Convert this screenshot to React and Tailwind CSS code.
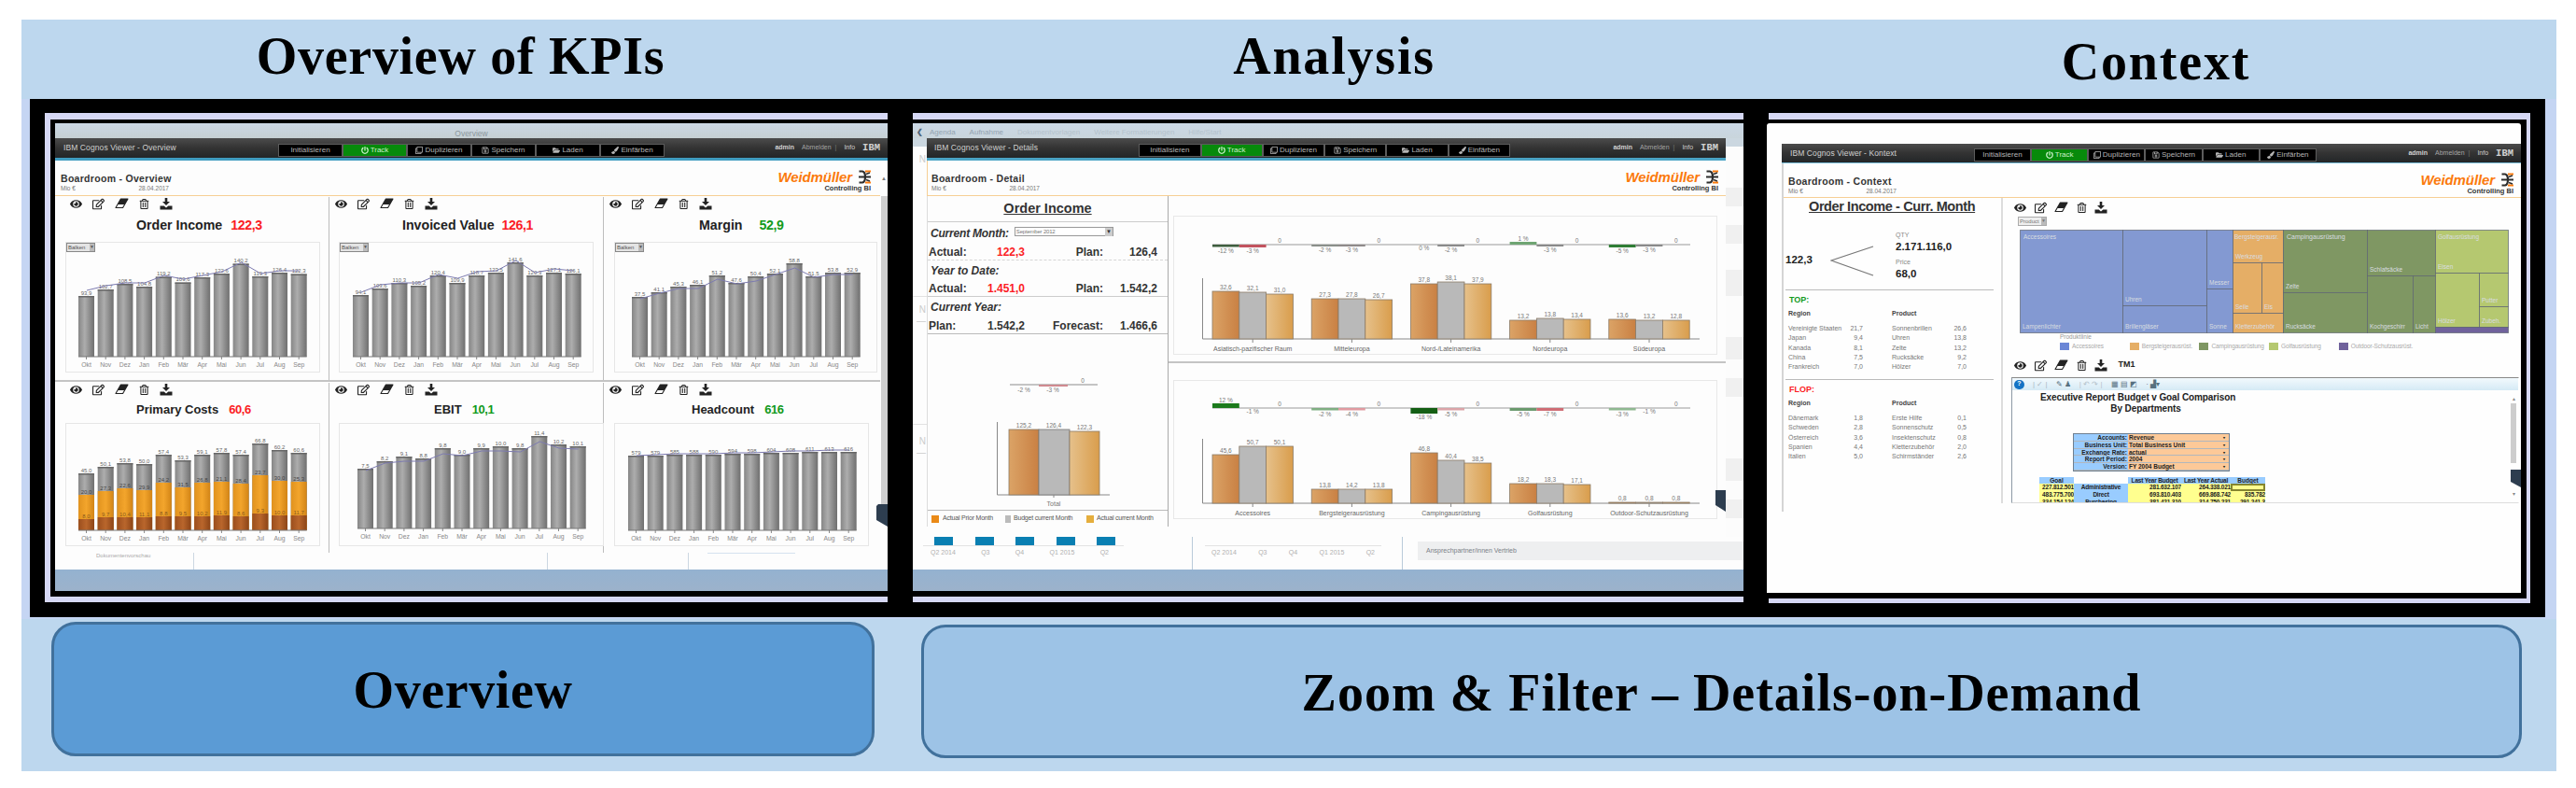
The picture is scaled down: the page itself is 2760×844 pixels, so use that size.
import clsx from "clsx";
import { FaEye, FaRegEdit, FaRegTrashAlt, FaPowerOff, FaRegClone, FaRegSave, FaFolderOpen, FaPaintBrush } from "react-icons/fa";

const MONTHS = ["Okt", "Nov", "Dez", "Jan", "Feb", "Mär", "Apr", "Mai", "Jun", "Jul", "Aug", "Sep"];

// tops and line points are y coordinates inside the chart box
const KPIS = [
    {
        title: "Order Income", value: "122,3", tone: "text-[#fb1d25]", head: "pl-[87px] gap-[9px]", icons: "pl-4", box: "ml-[11px] w-[273px]",
        width: 273, x0: 13, base: 122, select: true,
        tops: [57, 50, 44, 47, 36.5, 42.5, 37, 33, 22.5, 36, 32, 33.5],
        line: [51, 46, 43, 43, 35, 39, 35, 31, 21, 33, 30, 30],
        labels: ["93,9", "102,7", "108,5", "104,8", "119,2", "109,6", "117,3", "122,6", "140,2", "119,3", "126,4", "122,3"],
    },
    {
        title: "Invoiced Value", value: "126,1", tone: "text-[#fb1d25]", head: "pl-[78px] gap-[8px]", icons: "pl-[6px]", box: "ml-[10px] w-[273px]",
        width: 273, x0: 14, base: 122, select: true,
        tops: [56, 49, 43, 46, 35, 43, 35, 32, 21, 35, 32, 33],
        line: [53, 45, 43, 43, 34, 38, 31, 30, 19, 32, 28, 30],
        labels: ["94,1", "103,6", "110,3", "105,2", "120,4", "109,9", "118,7", "123,5", "141,6", "120,3", "127,1", "126,1"],
    },
    {
        title: "Margin", value: "52,9", tone: "text-[#129a1c]", head: "pl-[102px] gap-[18px]", icons: "pl-[6px]", box: "ml-[11px] w-[282px]",
        width: 282, x0: 18, base: 122, select: true,
        tops: [58, 53, 47, 45, 35, 43, 36, 33, 22, 36, 32, 32],
        line: [60, 54, 49, 49, 39, 44, 41, 34, 27, 37, 34, 34],
        labels: ["37,5", "41,1", "45,3", "46,1", "51,2", "47,6", "50,4", "52,1", "58,8", "51,5", "53,8", "52,9"],
    },
    {
        title: "Primary Costs", value: "60,6", tone: "text-[#fb1d25]", head: "pl-[87px] gap-[11px]", icons: "pl-4", box: "ml-[11px] w-[273px]",
        width: 273, x0: 13, base: 114, stacked: true,
        tops: [53, 46, 42, 43, 33, 39, 33, 31, 33, 21, 28, 31],
        mid: [76, 72, 69, 71, 63, 68, 63, 62, 64, 55, 61, 62],
        low: [102, 100, 100, 100, 99, 99, 99, 98, 99, 96, 98, 98],
        labels: ["45,0", "50,1", "53,8", "50,0", "57,4", "53,3", "59,1", "57,8", "57,4", "66,8", "60,2", "60,6"],
    },
    {
        title: "EBIT", value: "10,1", tone: "text-[#129a1c]", head: "pl-[112px] gap-[11px]", icons: "pl-[6px]", box: "ml-[10px] w-[284px]",
        width: 284, x0: 19, base: 112,
        tops: [48, 40, 35, 37, 26, 33, 26, 24, 26, 13, 22, 24],
        line: [50, 42, 40, 40, 32, 34, 29, 29, 30, 19, 26, 27],
        labels: ["7,5", "8,2", "9,1", "8,8", "9,8", "9,0", "9,9", "10,0", "9,8", "11,4", "10,2", "10,1"],
    },
    {
        title: "Headcount", value: "616", tone: "text-[#129a1c]", head: "pl-[94px] gap-[11px]", icons: "pl-[6px]", box: "ml-[11px] w-[273px]",
        width: 273, x0: 14, base: 114,
        tops: [34, 34, 33, 33, 33, 32, 32, 31, 31, 30, 30, 30],
        line: [34, 33, 32, 32, 32, 31, 31, 30, 29, 29, 28, 28],
        labels: ["579", "579", "585", "588", "590", "594", "598", "604", "608", "611", "613", "616"],
    },
];

const REGION_GROUPS = [
    { name: "Asiatisch-pazifischer Raum", tops: [80, 81, 83], labels: ["32,6", "32,1", "31,0"], deltas: [[-2.5, "-12 %", "#3f5e3f"], [-3, "-3 %", "#c2535f"]] },
    { name: "Mitteleuropa", tops: [88, 88, 89], labels: ["27,3", "27,8", "26,7"], deltas: [[-2, "-2 %", "#8a8f8a"], [-2, "-3 %", "#8f8a8a"]] },
    { name: "Nord-/Lateinamerika", tops: [72, 70, 72], labels: ["37,8", "38,1", "37,9"], deltas: [[0, "0 %", "#999"], [-2, "-2 %", "#8a8a8a"]] },
    { name: "Nordeuropa", tops: [111, 109, 110], labels: ["13,2", "13,8", "13,4"], deltas: [[3, "1 %", "#6fa573"], [-2, "-3 %", "#8a8a8a"]] },
    { name: "Südeuropa", tops: [110, 111, 111], labels: ["13,6", "13,2", "12,8"], deltas: [[-3, "-5 %", "#2f7d35"], [-2, "-3 %", "#8a8a8a"]] },
];

const PRODUCT_GROUPS = [
    { name: "Accessoires", tops: [79, 70, 70], labels: ["45,6", "50,7", "50,1"], deltas: [[5, "12 %", "#1c7a1c"], [0, "-1 %", "#999"]] },
    { name: "Bergsteigerausrüstung", tops: [116, 116, 116], labels: ["13,8", "14,2", "13,8"], deltas: [[-2.5, "-2 %", "#7fae82"], [-2.5, "-4 %", "#e09aa0"]] },
    { name: "Campingausrüstung", tops: [77, 85, 88], labels: ["46,8", "40,4", "38,5"], deltas: [[-6, "-18 %", "#145f14"], [-2.5, "-5 %", "#dba4a8"]] },
    { name: "Golfausrüstung", tops: [110, 110, 111], labels: ["18,2", "18,3", "17,1"], deltas: [[-3, "-5 %", "#6b9a6e"], [-3, "-7 %", "#cf6d75"]] },
    { name: "Outdoor-Schutzausrüstung", tops: [130, 130, 130], labels: ["0,8", "0,8", "0,8"], deltas: [[-2.5, "-3 %", "#8fb891"], [0, "-1 %", "#999"]] },
];

const TREEMAP = [
    { x: 0, y: 0, w: 110, h: 110, c: "#8399d2", t: "Lampenlichter" },
    { x: 110, y: 0, w: 90, h: 81, c: "#8399d2", t: "Uhren" },
    { x: 110, y: 81, w: 90, h: 29, c: "#8399d2", t: "Brillengläser" },
    { x: 200, y: 0, w: 28, h: 63, c: "#8399d2", t: "Messer" },
    { x: 200, y: 63, w: 28, h: 47, c: "#8399d2", t: "Sonne" },
    { x: 228, y: 0, w: 54, h: 35, c: "#e5ae66", t: "Werkzeug" },
    { x: 228, y: 35, w: 31, h: 54, c: "#e5ae66", t: "Seile" },
    { x: 259, y: 35, w: 23, h: 54, c: "#e5ae66", t: "Eis" },
    { x: 228, y: 89, w: 54, h: 21, c: "#e5ae66", t: "Kletterzubehör" },
    { x: 282, y: 0, w: 90, h: 67, c: "#7f9763", t: "Zelte" },
    { x: 282, y: 67, w: 90, h: 43, c: "#7f9763", t: "Rucksäcke" },
    { x: 372, y: 0, w: 73, h: 49, c: "#7f9763", t: "Schlafsäcke" },
    { x: 372, y: 49, w: 49, h: 61, c: "#7f9763", t: "Kochgeschirr" },
    { x: 421, y: 49, w: 24, h: 61, c: "#7f9763", t: "Licht" },
    { x: 445, y: 0, w: 78, h: 46, c: "#b5c870", t: "Eisen" },
    { x: 445, y: 46, w: 47, h: 58, c: "#b5c870", t: "Hölzer" },
    { x: 492, y: 46, w: 31, h: 36, c: "#b5c870", t: "Putter" },
    { x: 492, y: 82, w: 31, h: 22, c: "#b5c870", t: "Zubeh." },
    { x: 445, y: 104, w: 78, h: 6, c: "#70629c", t: "" },
];

const TOP_ROWS = [
    ["Vereinigte Staaten", "21,7", "Sonnenbrillen", "26,6"],
    ["Japan", "9,4", "Uhren", "13,8"],
    ["Kanada", "8,1", "Zelte", "13,2"],
    ["China", "7,5", "Rucksäcke", "9,2"],
    ["Frankreich", "7,0", "Hölzer", "7,0"],
];

const FLOP_ROWS = [
    ["Dänemark", "1,8", "Erste Hilfe", "0,1"],
    ["Schweden", "2,8", "Sonnenschutz", "0,5"],
    ["Österreich", "3,6", "Insektenschutz", "0,8"],
    ["Spanien", "4,4", "Kletterzubehör", "2,0"],
    ["Italien", "5,0", "Schirmständer", "2,6"],
];

const TABS = [
    { label: "Initialisieren" },
    { label: "Track", icon: FaPowerOff, active: true },
    { label: "Duplizieren", icon: FaRegClone },
    { label: "Speichern", icon: FaRegSave },
    { label: "Laden", icon: FaFolderOpen },
    { label: "Einfärben", icon: FaPaintBrush },
];

function Toolbar({ title, className, tabsClass, tabClass, rightClass }) {
    return (
        <div className={clsx("flex shrink-0 items-center bg-gradient-to-b from-[#4c4c4c] via-[#333333] to-[#232628] text-[#d0d0d0]", className)}>
            <div className="flex-1 whitespace-nowrap text-[8.5px] tracking-[0.1px]">{title}</div>
            <div className={clsx("flex h-3.5 self-end", tabsClass)}>
                {TABS.map(({ label, icon: Icon, active }) => (
                    <div
                        key={label}
                        className={clsx("flex items-center justify-center gap-[2px] border border-[#5c5c5c] text-[8px]", tabClass, active ? "bg-[#078a0b] text-[#c8f0c8]" : "bg-black text-[#b5b5b5]")}
                    >
                        {Icon && <Icon size={8} />}
                        {label}
                    </div>
                ))}
            </div>
            <div className={clsx("flex items-center justify-end text-[7px]", rightClass)}>
                <span className="font-bold">admin</span>
                <span className="ml-2 text-[#a5a5a5]">Abmelden</span>
                <span className="ml-1 text-[#777]">|</span>
                <span className="ml-2">Info</span>
                <span className="ml-2 font-['Liberation_Mono',monospace] text-[10.5px] font-bold leading-none">IBM</span>
            </div>
        </div>
    );
}

function Header({ title, className }) {
    return (
        <div className={clsx("flex shrink-0 justify-between border-b border-[#f6cf95]", className)}>
            <div className="w-[118px] pt-[13px]">
                <div className="whitespace-nowrap text-[10.5px] font-bold leading-[12px] tracking-[0.3px] text-[#333]">{title}</div>
                <div className="flex justify-between pr-[2px] text-[6.5px] leading-[9px] text-[#777]">
                    <span>Mio €</span>
                    <span>28.04.2017</span>
                </div>
            </div>
            <div className="flex flex-col items-end pt-[10px]">
                <div className="flex items-center gap-[6px]">
                    <span className="text-[15px] font-bold italic leading-[15px] tracking-[-0.1px] text-[#fb7a0c]">Weidmüller</span>
                    <svg className="h-[15px] w-[14px]" viewBox="0 0 14 15">
                        <path d="M1.5 1.5H5Q8 2 8 7.5Q8 13 5 13.5H1.5" fill="none" stroke="#2d2d2d" strokeWidth="2.2" />
                        <path d="M1 7.5H14" stroke="#2d2d2d" strokeWidth="2" />
                        <path d="M8 1.5h6M8 13.5h6" stroke="#fb7a0c" strokeWidth="1.8" />
                        <path d="M9 4.5l4-1.5M9 10.5l4 1.5" stroke="#2d2d2d" strokeWidth="1.4" />
                    </svg>
                </div>
                <div className="text-[7.5px] font-bold leading-[9px] text-[#333]">Controlling BI</div>
            </div>
        </div>
    );
}

function EraserIcon() {
    return (
        <svg width="15" height="12" viewBox="0 0 15 12">
            <path d="M6.4 1H14L8.6 10.5H1z" fill="none" stroke="currentColor" strokeWidth="1.1" strokeLinejoin="round" />
            <path d="M6.4 1H14L10.6 7H3z" fill="currentColor" />
        </svg>
    );
}

function DownloadIcon() {
    return (
        <svg width="14" height="13" viewBox="0 0 14 13">
            <path d="M5.7 0h2.6v4H11L7 8 3 4h2.7z" fill="currentColor" />
            <path d="M0.5 8.5H4.7L7 10.4 9.3 8.5H13.5V12.5H0.5z" fill="currentColor" />
        </svg>
    );
}

function ActionIcons({ className, children }) {
    return (
        <div className={clsx("flex items-center text-[#222]", className)}>
            <FaEye size={13} />
            <FaRegEdit size={13} />
            <EraserIcon />
            <FaRegTrashAlt size={11} />
            <DownloadIcon />
            {children}
        </div>
    );
}

function MonthChart({ kpi, height }) {
    const pitch = 20.7;
    return (
        <svg width={kpi.width - 2} height={height} className="overflow-visible" fontFamily="Liberation Sans, sans-serif">
            <defs>
                <linearGradient id="steel">
                    <stop offset="0" stopColor="#868686" />
                    <stop offset="0.4" stopColor="#adadad" />
                    <stop offset="1" stopColor="#6f6f6f" />
                </linearGradient>
                <linearGradient id="gold">
                    <stop offset="0" stopColor="#e0921e" />
                    <stop offset="0.5" stopColor="#f3a52c" />
                    <stop offset="1" stopColor="#d28416" />
                </linearGradient>
                <linearGradient id="rust">
                    <stop offset="0" stopColor="#9b4e1d" />
                    <stop offset="0.5" stopColor="#b9662c" />
                    <stop offset="1" stopColor="#8d4517" />
                </linearGradient>
            </defs>
            {MONTHS.map((m, i) => {
                const x = kpi.x0 + i * pitch;
                const cx = x + 8.5;
                return (
                    <g key={m}>
                        <rect x={x} y={kpi.tops[i]} width="17" height={kpi.base - kpi.tops[i]} fill="url(#steel)" />
                        <rect x={x} y={kpi.tops[i]} width="17" height="1.5" fill="#666" />
                        {kpi.stacked && (
                            <>
                                <rect x={x} y={kpi.mid[i]} width="17" height={kpi.base - kpi.mid[i]} fill="url(#gold)" />
                                <rect x={x} y={kpi.low[i]} width="17" height={kpi.base - kpi.low[i]} fill="url(#rust)" />
                                <text x={cx} y={kpi.mid[i] - 1} fontSize="6" fill="#444" textAnchor="middle">{20 + ((i * 7) % 12)},{(i * 3) % 10}</text>
                                <text x={cx} y={kpi.low[i] - 1} fontSize="6" fill="#8a5a1c" textAnchor="middle">{8 + (i % 4)},{(i * 7) % 10}</text>
                            </>
                        )}
                        <text x={cx} y={kpi.tops[i] - 1.5} fontSize="6" fill="#666" textAnchor="middle">{kpi.labels[i]}</text>
                        <path d={`M${cx} ${kpi.base}v3`} stroke="#888" />
                        <text x={cx} y={kpi.base + 11} fontSize="6.8" fill="#888" textAnchor="middle">{m}</text>
                    </g>
                );
            })}
            <path d={`M${kpi.x0} ${kpi.base}h${11 * pitch + 17}`} stroke="#777" />
            {kpi.line && (
                <polyline points={kpi.line.map((y, i) => `${kpi.x0 + 9 + i * pitch},${y}`).join(" ")} fill="none" stroke="#7d7bb0" strokeWidth="1" />
            )}
        </svg>
    );
}

function KpiCard({ kpi, className, second }) {
    return (
        <div className={clsx("flex flex-col", className)}>
            <ActionIcons className={clsx("h-[14px] gap-[11px]", kpi.icons)} />
            <div className={clsx("flex items-center whitespace-nowrap font-bold", second ? "h-[29px] text-[13px]" : "h-[34px] text-[14.2px]", kpi.head)}>
                <span className="text-[#222]">{kpi.title}</span>
                <span className={clsx("tracking-[-0.4px]", kpi.tone)}>{kpi.value}</span>
            </div>
            <div className={clsx("relative border border-[#e6e6e6]", kpi.box, second ? "h-[132px]" : "h-[140px]")}>
                {kpi.select && (
                    <div className="absolute left-0 top-0 flex h-[10px] w-[31px] items-center justify-between border border-[#888] bg-[#e4e4e4] pl-px text-[6px] text-[#555]">
                        Balken <span className="bg-[#bbb] text-[5px]">▼</span>
                    </div>
                )}
                <MonthChart kpi={kpi} height={second ? 130 : 138} />
            </div>
        </div>
    );
}

function OverviewScreen() {
    return (
        <div className="flex h-full w-[892px] flex-col bg-[#fdfdfd]">
            <div className="h-4 bg-gradient-to-b from-[#cbd8e6] to-[#c6d0d3] pt-[7px] text-center text-[8.5px] leading-[9px] text-[#8b979d]">Overview</div>
            <Toolbar title="IBM Cognos Viewer - Overview" className="h-6 border-b-[3px] border-[#3f9cc0] pl-[9px] pr-2" tabsClass="mb-px" tabClass="w-[69px]" rightClass="w-[231px]" />
            <div className="flex h-[420px]">
                <div className="flex w-[884px] flex-col">
                    <Header title="Boardroom - Overview" className="h-[38px] pl-[6px] pr-[10px]" />
                    <div className="flex h-[199px] border-b-2 border-[#c4c4c4] pt-px">
                        <KpiCard kpi={KPIS[0]} className="w-[294px] border-r border-[#bdbdbd]" />
                        <KpiCard kpi={KPIS[1]} className="w-[294px] border-r border-[#bdbdbd]" />
                        <KpiCard kpi={KPIS[2]} className="w-[296px]" />
                    </div>
                    <div className="flex h-[183px] pt-px">
                        <KpiCard second kpi={KPIS[3]} className="w-[294px] border-r border-[#bdbdbd]" />
                        <KpiCard second kpi={KPIS[4]} className="w-[294px] border-r border-[#bdbdbd]" />
                        <KpiCard second kpi={KPIS[5]} className="w-[296px]" />
                    </div>
                </div>
                <div className="relative w-2 text-center text-[6px] leading-[38px] text-[#777]">
                    ▲
                    <div className="ml-px h-[345px] w-[7px] bg-[#cfcfcf]" />
                    <svg className="absolute right-0 top-[368px] h-6 w-3" viewBox="0 0 12 24">
                        <path d="M0 2L2 0H12V24L0 17z" fill="#2d3d4f" />
                    </svg>
                </div>
            </div>
            <div className="flex h-[18px] text-[6px] leading-[6px] text-[#aaa]">
                <div className="w-[149px] border-r border-[#ccd7e2] pl-11">Dokumentenvorschau</div>
                <div className="w-[379px] border-r border-[#ccd7e2]" />
                <div className="w-[151px] border-r border-[#ccd7e2]" />
                <div className="ml-5 h-px w-[94px] bg-[#d5e2ef]" />
            </div>
            <div className="flex-1 bg-gradient-to-b from-[#94b2d0] to-[#9cb2cb]" />
        </div>
    );
}

function Gradients() {
    return (
        <defs>
            <linearGradient id="prior">
                <stop offset="0" stopColor="#dba366" />
                <stop offset="1" stopColor="#c98043" />
            </linearGradient>
            <linearGradient id="current">
                <stop offset="0" stopColor="#e6c18b" />
                <stop offset="1" stopColor="#d99d4c" />
            </linearGradient>
        </defs>
    );
}

const SERIES_FILL = ["url(#prior)", "#b9b9b9", "url(#current)"];

function GroupedChart({ groups, deltaY, base, axisTop, width, height }) {
    const w = 28.8;
    return (
        <svg width={width} height={height} fontFamily="Liberation Sans, sans-serif" fontSize="6.5" textAnchor="middle">
            <Gradients />
            <path d={`M41 ${deltaY}H553`} stroke="#9a9a9a" />
            <path d={`M30.5 ${axisTop}V${base}H563`} fill="none" stroke="#888" />
            {groups.map((g, i) => {
                const x = 41 + i * 106.2;
                return (
                    <g key={g.name}>
                        {g.deltas.map(([h, label, color], k) => (
                            <g key={k}>
                                <rect x={x + k * w} y={h > 0 ? deltaY - h : deltaY} width={w} height={Math.abs(h)} fill={color} />
                                <text x={x + (k + 0.5) * w} y={h > 0 ? deltaY - h - 1 : deltaY - h + 6} fill="#777">{label}</text>
                            </g>
                        ))}
                        <text x={x + 2.5 * w} y={deltaY - 2} fill="#777">0</text>
                        {g.tops.map((top, k) => (
                            <g key={k}>
                                <rect x={x + k * w} y={top} width={w} height={base - top} fill={SERIES_FILL[k]} stroke="#8a7a66" strokeWidth="0.8" />
                                <text x={x + (k + 0.5) * w} y={top - 2} fill="#777">{g.labels[k]}</text>
                            </g>
                        ))}
                        <path d={`M${x + 1.5 * w} ${base}v4`} stroke="#888" />
                        <text x={x + 1.5 * w} y={base + 13} fontSize="7" fill="#666">{g.name}</text>
                    </g>
                );
            })}
        </svg>
    );
}

function FigureRow({ left, leftValue, right, rightValue, tone, className }) {
    return (
        <div className={clsx("flex items-center text-[12px] font-bold text-[#333]", className)}>
            <span className="w-[54px] pl-px">{left}</span>
            <span className={clsx("w-[50px] text-right", tone)}>{leftValue}</span>
            <span className="w-[84px] text-right">{right}</span>
            <span className="w-[58px] text-right">{rightValue}</span>
        </div>
    );
}

function DetailPane() {
    return (
        <div className="flex w-[258px] flex-col border-l border-[#dcdcdc]">
            <div className="flex h-7 items-center justify-center border-b border-[#ccc] text-[14.5px] font-bold text-[#333] underline">Order Income</div>
            <div className="flex h-6 items-center whitespace-nowrap pl-[3px] text-[12px] font-bold italic tracking-[-0.2px] text-[#333]">
                Current Month:
                <div className="mb-1 ml-[6px] flex h-[10px] w-[106px] items-center justify-between border border-[#999] bg-white pl-px text-[6px] font-normal not-italic text-[#777]">
                    September 2012 <span className="bg-[#ccc] px-px text-[6px] text-[#333]">▼</span>
                </div>
            </div>
            <FigureRow className="h-[17px] border-b border-dashed border-[#d5d5d5]" left="Actual:" leftValue="122,3" right="Plan:" rightValue="126,4" tone="text-[#fb1d25]" />
            <div className="h-[22px] pl-[3px] text-[12px] font-bold italic leading-[22px] text-[#333]">Year to Date:</div>
            <FigureRow className="h-[17px] border-b border-[#ccc]" left="Actual:" leftValue="1.451,0" right="Plan:" rightValue="1.542,2" tone="text-[#fb1d25]" />
            <div className="h-[23px] pl-[3px] text-[12px] font-bold italic leading-[23px] text-[#333]">Current Year:</div>
            <FigureRow className="h-[17px] border-b border-[#bbb]" left="Plan:" leftValue="1.542,2" right="Forecast:" rightValue="1.466,6" />
            <svg width="257" height="188" fontFamily="Liberation Sans, sans-serif" fontSize="6.5" textAnchor="middle" fill="#777">
                <Gradients />
                <path d="M88 54H182" stroke="#8c8c8c" />
                <rect x="119" y="54" width="31" height="2" fill="#d08a90" />
                <text x="103" y="62">-2 %</text>
                <text x="134" y="62">-3 %</text>
                <text x="166" y="52">0</text>
                <path d="M74.5 94V172H195" fill="none" stroke="#888" />
                <rect x="87" y="102" width="32" height="70" fill="url(#prior)" stroke="#8a7a66" strokeWidth="0.8" />
                <rect x="119" y="102" width="33" height="70" fill="#b9b9b9" stroke="#777" strokeWidth="0.8" />
                <rect x="152" y="104" width="32" height="68" fill="url(#current)" stroke="#8a7a66" strokeWidth="0.8" />
                <text x="103" y="100">125,2</text>
                <text x="135" y="100">126,4</text>
                <text x="168" y="102">122,3</text>
                <path d="M135 172v3" stroke="#888" />
                <text x="135" y="184" fontSize="7">Total</text>
            </svg>
            <div className="flex h-[18px] items-center border-t border-[#bbb] pl-1 text-[7px] tracking-[-0.2px] text-[#555]">
                <span className="mr-1 h-2 w-2 bg-[#ea8a17]" />
                <span className="w-[67px] whitespace-nowrap">Actual Prior Month</span>
                <span className="mr-[3px] h-2 w-[6px] bg-[#bbb]" />
                <span className="w-[78px]">Budget current Month</span>
                <span className="mr-[3px] h-2 w-2 bg-[#e5ae3d]" />
                <span className="whitespace-nowrap">Actual current Month</span>
            </div>
        </div>
    );
}

function QuarterLabels({ className }) {
    return (
        <div className={clsx("flex text-[7px] text-[#b0b0b0]", className)}>
            <span>Q2 2014</span>
            <span>Q3</span>
            <span>Q4</span>
            <span>Q1 2015</span>
            <span>Q2</span>
        </div>
    );
}

function AnalysisScreen() {
    return (
        <div className="flex h-full w-[890px] flex-col bg-[#fdfdfd]">
            <div className="flex h-4 items-end gap-[15px] bg-gradient-to-b from-[#cbd8e6] to-[#c9d5dc] pb-px pl-1 text-[8px] leading-[10px] text-[#93a3b0]">
                <span className="-mr-2 font-bold text-[#4e6478]">❮</span>
                <span>Agenda</span>
                <span>Aufnahme</span>
                <span className="text-[#b4c2cc]">Dokumentvorlagen</span>
                <span className="text-[#b4c2cc]">Weitere Formatierungen</span>
                <span className="text-[#b4c2cc]">Hilfe/Start</span>
            </div>
            <div className="flex h-[427px]">
                <div className="w-[15px] text-right text-[10px] leading-3 text-[#ccc]">
                    <div className="h-[9px] bg-[#cbd7e0]" />
                    <div className="h-[160px] pr-px pt-2">N</div>
                    <div className="h-[137px] border-t border-[#e2e2e2] pr-px pt-2">N<br />—</div>
                    <div className="border-t border-[#e2e2e2] pr-px pt-3">N<br />—</div>
                </div>
                <div className="relative flex w-[856px] flex-col">
                    <Toolbar title="IBM Cognos Viewer - Details" className="h-6 border-b-[3px] border-[#4aa3c4] pl-2 pr-2" tabsClass="mb-px" tabClass="w-[66.3px]" rightClass="w-[223px]" />
                    <Header title="Boardroom - Detail" className="h-[38px] border-l pl-1 pr-2" />
                    <div className="flex h-[354px]">
                        <DetailPane />
                        <div className="flex flex-1 flex-col border-l border-[#aaa]">
                            <div className="h-[179px] border-b-2 border-[#c4c4c4] pl-[5px] pt-[21px]">
                                <div className="h-[149px] w-[583px] border border-[#e8e8e8]">
                                    <GroupedChart groups={REGION_GROUPS} deltaY={30} base={131} axisTop={66} width={581} height={147} />
                                </div>
                            </div>
                            <div className="pl-[5px] pt-[18px]">
                                <div className="h-[149px] w-[583px] border border-[#e8e8e8]">
                                    <GroupedChart groups={PRODUCT_GROUPS} deltaY={29} base={131} axisTop={62} width={581} height={147} />
                                </div>
                            </div>
                        </div>
                    </div>
                    <svg className="absolute right-0 top-[376px] h-6 w-[11px]" viewBox="0 0 11 24">
                        <path d="M0 1H11V24L0 17z" fill="#2d3d4f" />
                    </svg>
                </div>
                <div className="flex flex-1 flex-col gap-5 bg-[#fcfcfc]">
                    <div className="h-[9px] bg-[#cbd7e0]" />
                    <div className="mt-6 h-5 bg-[#f0f0f0]" />
                    <div className="h-5 bg-[#f0f0f0]" />
                    <div className="mt-2 h-7 bg-[#f0f0f0]" />
                    <div className="mt-6 h-6 bg-[#f0f0f0]" />
                    <div className="h-5 bg-[#f0f0f0]" />
                    <div className="mt-auto h-6 bg-[#f0f0f0]" />
                    <div className="mb-5 h-5 bg-[#f0f0f0]" />
                </div>
            </div>
            <div className="flex h-[35px]">
                <div className="w-[300px] border-r border-[#b9cbd9] pl-[23px]">
                    <div className="flex h-[9px] gap-[23.5px]">
                        {[0, 1, 2, 3, 4].map((n) => (
                            <div key={n} className="w-5 bg-[#0a7fb2]" />
                        ))}
                    </div>
                    <QuarterLabels className="-ml-3 w-[215px] justify-between border-t border-[#e3e3e3] pl-2 pr-4 pt-[2px]" />
                </div>
                <div className="w-[225px] border-r border-[#b9cbd9] pl-[13px] pt-[9px]">
                    <QuarterLabels className="w-[189px] justify-between border-t border-[#e3e3e3] px-[7px] pt-[2px]" />
                </div>
                <div className="ml-4 mt-[5px] flex h-5 flex-1 items-center bg-[#eeeff0] pl-[9px] text-[7px] text-[#7b8188]">Ansprechpartner/innen Vertrieb</div>
            </div>
            <div className="flex-1 bg-gradient-to-b from-[#94b2d0] to-[#9cb2cb]" />
        </div>
    );
}

function RankTable({ title, tone, rows }) {
    return (
        <div className="h-24 border-t border-[#bbb] text-[7px] text-[#777]">
            <div className={clsx("h-[17px] pl-1 text-[9px] font-bold leading-5", tone)}>{title}</div>
            <div className="flex h-[19px] pl-[3px] font-bold leading-4 text-[#444]">
                <span className="w-[111px]">Region</span>
                <span>Product</span>
            </div>
            {rows.map(([region, a, product, b]) => (
                <div key={region} className="flex h-[10.3px] whitespace-nowrap pl-[3px] leading-[10px]">
                    <span className="w-[60px]">{region}</span>
                    <span className="w-5 text-right">{a}</span>
                    <span className="ml-[31px] w-[60px]">{product}</span>
                    <span className="w-5 text-right">{b}</span>
                </div>
            ))}
        </div>
    );
}

function Treemap() {
    return (
        <svg width="524" height="111" fontFamily="Liberation Sans, sans-serif" fontSize="6.5" fill="#d9dde0">
            {TREEMAP.map((c) => (
                <g key={`${c.x}-${c.y}`}>
                    <rect x={c.x + 0.5} y={c.y + 0.5} width={c.w} height={c.h} fill={c.c} stroke="#5d6470" strokeOpacity="0.7" />
                    <text x={c.x + 3} y={c.y + c.h - 4}>{c.t}</text>
                </g>
            ))}
            <text x="4" y="10">Accessoires</text>
            <text x="230" y="10">Bergsteigerausr.</text>
            <text x="286" y="10" fontSize="7">Campingausrüstung</text>
            <text x="448" y="10">Golfausrüstung</text>
        </svg>
    );
}

function Spreadsheet() {
    const params = [
        ["Accounts:", "Revenue"],
        ["Business Unit:", "Total Business Unit"],
        ["Exchange Rate:", "actual"],
        ["Report Period:", "2004"],
        ["Version:", "FY 2004 Budget"],
    ];
    const rows = [
        ["227.812.501", "Administrative", "281.632.107", "264.338.021", ""],
        ["483.775.700", "Direct", "693.810.403", "669.868.742", "835.782"],
        ["334.154.124", "Purchasing", "381.421.310", "314.750.231", "291.241.3"],
    ];
    return (
        <div className="relative h-[135px] overflow-hidden border border-b-[#ddd] border-l-[#8d99a5] border-r-transparent border-t-[#888] text-[6.5px] text-[#222]">
            <div className="flex h-[13px] items-center gap-[9px] bg-gradient-to-b from-[#f2f9fd] to-[#d5eaf5] pl-[2px] text-[8px] text-[#56707f]">
                <span className="flex h-[10px] w-[11px] items-center justify-center rounded-full bg-[#1372c4] text-[7px] font-bold text-white">?</span>
                <span className="text-[#a8b8c4]">| ✓ |</span>
                <span>✎ ♟</span>
                <span className="text-[#b4c2cc]">| ↶ ↷ |</span>
                <span>▦ ▤ ◩</span>
                <span>· ▟▾</span>
            </div>
            <div className="ml-[30px] w-[206px] pt-[2px] text-center text-[10px] font-bold leading-3 tracking-[-0.1px]">
                <div className="whitespace-nowrap">Executive Report Budget v Goal Comparison</div>
                <div className="pl-5">By Departments</div>
            </div>
            <div className="ml-[65px] mt-[20px] w-[168px] border border-[#6f7f8f]">
                {params.map(([k, v]) => (
                    <div key={k} className="flex h-[7.8px] border-b border-[#7d8791]/60 font-bold leading-[7px]">
                        <span className="w-[58px] bg-[#99ccff] pr-px text-right">{k}</span>
                        <span className="flex flex-1 justify-between bg-[#fdc998] pl-px pr-1">
                            {v}
                            <span className="text-[4px]">▾</span>
                        </span>
                    </div>
                ))}
            </div>
            <div className="ml-[29px] mt-[6px] w-[242px] font-bold leading-2">
                <div className="flex h-[7px] text-center leading-[7px]">
                    <span className="w-[37px] bg-[#99ccff]">Goal</span>
                    <span className="w-[58px]" />
                    <span className="w-[57px] whitespace-nowrap bg-[#99ccff] tracking-[-0.2px]">Last Year Budget</span>
                    <span className="w-[53px] whitespace-nowrap bg-[#99ccff] tracking-[-0.2px]">Last Year Actual</span>
                    <span className="w-[37px] bg-[#99ccff]">Budget</span>
                </div>
                {rows.map(([a, b, c, d, e], i) => (
                    <div key={b} className="flex h-2 text-right tracking-[-0.2px]">
                        <span className="w-[37px] bg-[#ffff8f]">{a}</span>
                        <span className="w-[58px] bg-[#99ccff] text-center">{b}</span>
                        <span className="w-[57px] bg-[#ffff8f]">{c}</span>
                        <span className="w-[53px] bg-[#ffff8f]">{d}</span>
                        <span className={clsx("w-[37px] bg-[#ffff8f]", i === 0 && "border-2 border-[#85852f]")}>{e}</span>
                    </div>
                ))}
            </div>
            <div className="absolute bottom-1 right-[2px] top-[18px] flex w-[6px] flex-col items-center justify-between text-[6px] text-[#888]">
                ▴
                <div className="mb-auto h-[64px] w-[6px] bg-[#cdcdcd]" />
                ▾
            </div>
        </div>
    );
}

function ContextScreen() {
    const legend = [
        ["Accessoires", "bg-[#6b86d6]"],
        ["Bergsteigerausrüst.", "bg-[#e5ae66]"],
        ["Campingausrüstung", "bg-[#7f9763]"],
        ["Golfausrüstung", "bg-[#b5c870]"],
        ["Outdoor-Schutzausrüst.", "bg-[#70629c]"],
    ];
    return (
        <div className="-ml-[2px] h-full w-[808px] rounded-t-[3px] bg-[#fefefe] pl-4 pt-[22px]">
            <Toolbar title="IBM Cognos Viewer - Kontext" className="h-[21px] border-b border-[#7cc0da] pl-[9px] pr-2" tabsClass="mb-px" tabClass="w-[61.2px]" rightClass="w-[211px]" />
            <div className="relative border-l-2 border-[#d5d5d5]">
                <Header title="Boardroom - Context" className="h-[37px] pl-[5px] pr-2" />
                <div className="flex h-[336px]">
                    <div className="w-[233px] pl-[2px] pr-[8px]">
                        <div className="h-5 whitespace-nowrap pl-[25px] text-[14.5px] font-bold leading-[19px] tracking-[-0.4px] text-[#333] underline">Order Income - Curr. Month</div>
                        <div className="flex h-[78px] items-start text-[11.5px] font-bold text-[#222]">
                            <span className="w-12 pt-[38px]">122,3</span>
                            <svg width="48" height="36" className="mt-[29px]" viewBox="0 0 48 36">
                                <path d="M46 3L1 18L46 34" fill="none" stroke="#777" strokeWidth="1.3" />
                            </svg>
                            <div className="ml-[22px] mt-[15px]">
                                <div className="text-[7px] font-normal leading-[10px] text-[#888]">QTY</div>
                                <div className="leading-[15px]">2.171.116,0</div>
                                <div className="mt-1 text-[7px] font-normal leading-[10px] text-[#888]">Price</div>
                                <div className="leading-[15px]">68,0</div>
                            </div>
                        </div>
                        <RankTable title="TOP:" tone="text-[#129a1c]" rows={TOP_ROWS} />
                        <RankTable title="FLOP:" tone="text-[#fb1d25]" rows={FLOP_ROWS} />
                    </div>
                    <div className="flex h-[327px] flex-1 flex-col border-l-2 border-[#dcdcdc] pl-[9px] pr-[2px]">
                        <ActionIcons className="h-5 gap-[8.5px] pl-[3px]" />
                        <div className="ml-[7px] flex h-[10px] w-[31px] items-center justify-between border border-[#aaa] bg-[#eee] pl-px text-[6px] text-[#777]">
                            Product <span className="bg-[#bbb] text-[5px]">▼</span>
                        </div>
                        <div className="ml-[9px] mt-1">
                            <Treemap />
                        </div>
                        <div className="pl-[52px] text-[6.5px] leading-2 text-[#999]">Produktlinie</div>
                        <div className="flex h-[11px] items-center pl-[52px] text-[6.5px] tracking-[-0.1px] text-[#aaa]">
                            {legend.map(([name, color]) => (
                                <div key={name} className="flex w-[74.7px] items-center gap-[3px] whitespace-nowrap">
                                    <span className={clsx("h-2 w-[10px] shrink-0", color)} />
                                    {name}
                                </div>
                            ))}
                        </div>
                        <ActionIcons className="mb-auto mt-[5px] h-5 gap-[8.5px] pl-[3px]">
                            <span className="ml-[3px] text-[9px] font-bold">TM1</span>
                        </ActionIcons>
                        <Spreadsheet />
                    </div>
                </div>
                <svg className="absolute right-0 top-[327px] h-5 w-[11px]" viewBox="0 0 11 20">
                    <path d="M0 1H11V20L0 14z" fill="#2d3d4f" />
                </svg>
            </div>
        </div>
    );
}

export default function App() {
    return (
        <div className="h-[844px] w-[2760px] overflow-hidden bg-white pl-[23px] pt-[21px] font-['Liberation_Sans',sans-serif]">
            <div className="h-[805px] w-[2716px] bg-[#bdd7ee]">
                <div className="flex h-[85px] text-center font-['Liberation_Serif',serif] text-[56px] font-bold leading-[56px] text-black">
                    <h1 className="w-[941px] pt-[11px] tracking-[0.7px]">Overview of KPIs</h1>
                    <h1 className="w-[931px] pt-[11px] tracking-[1.8px]">Analysis</h1>
                    <h1 className="w-[830px] pt-[17px] tracking-[1.8px]">Context</h1>
                </div>

                <div className="h-[557px] bg-[#c5d5f3] pl-[9px] pr-3">
                    <div className="flex h-[555px] gap-[27px] bg-black pl-4 pr-4 pt-[15px]">
                        <div className="h-[524px] bg-[#d6d8f5] pb-[6px] pl-[6px] pt-[7px]">
                            <div className="h-[511px] bg-black pb-[6px] pl-[5px] pt-1">
                                <OverviewScreen />
                            </div>
                        </div>
                        <div className="h-[524px] bg-[#d6d8f5] pb-[6px] pt-[7px]">
                            <div className="h-[511px] bg-black pb-[6px] pt-1">
                                <AnalysisScreen />
                            </div>
                        </div>
                        <div className="h-[525px] bg-[#d6d8f5] pb-[5px] pr-[4px] pt-[7px]">
                            <div className="h-[513px] bg-black pb-[6px] pr-[6px] pt-1">
                                <ContextScreen />
                            </div>
                        </div>
                    </div>
                </div>

                <div className="flex gap-[50px] pl-8 pt-[3px] font-['Liberation_Serif',serif] text-[56px] font-bold leading-[56px] text-black">
                    <div className="h-[144px] w-[882px] rounded-[26px] border-[3px] border-[#41719c] bg-[#5b9bd5] pt-[42px] text-center tracking-[0.6px]">Overview</div>
                    <div className="mt-[3px] h-[143px] w-[1715px] rounded-[26px] border-[3px] border-[#41719c] bg-[#9dc3e6] pt-[42px] text-center tracking-[1px]">Zoom &amp; Filter – Details-on-Demand</div>
                </div>
            </div>
        </div>
    );
}
